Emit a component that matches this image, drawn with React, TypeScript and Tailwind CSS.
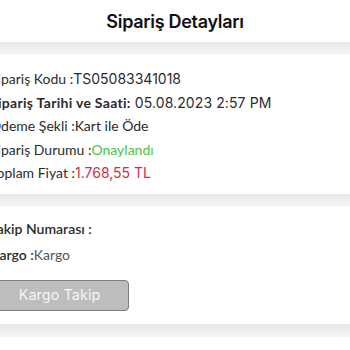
const label = "font-['Lato',sans-serif] text-[14px] text-[#2b2b2b]";
const value = "font-['Inter',sans-serif]";

function Row({ children }: { children: React.ReactNode }) {
  return <div className={`h-[23.5px] flex items-center whitespace-nowrap ${label}`}>{children}</div>;
}

function Divider() {
  return <div className="h-[13px] bg-gradient-to-b from-[#e9e9e9] to-[#f6f6f6]" />;
}

export default function App() {
  return (
    <div className="w-[350px] h-[350px] overflow-hidden bg-white">
      <div className="h-[42px] flex items-center justify-center">
        <h1 className="font-['Inter',sans-serif] text-[18px] font-semibold text-[#111] tracking-[-0.3px]">
          Sipariş Detayları
        </h1>
      </div>
      <Divider />

      <div className="-ml-[10px] pt-[12px] pb-[9px]">
        <Row>
          Sipariş Kodu :<span className={value}>TS05083341018</span>
        </Row>
        <Row>
          <span className="font-bold tracking-[0.3px]">Sipariş Tarihi ve Saati:</span>
          <span className={`${value} ml-1 tracking-[0.1px]`}>05.08.2023 2:57 PM</span>
        </Row>
        <Row>Ödeme Şekli :Kart ile Öde</Row>
        <Row>
          Sipariş Durumu :<span className="text-[#4cc43a]">Onaylandı</span>
        </Row>
        <Row>
          Toplam Fiyat :<span className={`${value} text-[#d12d4b]`}>1.768,55 TL</span>
        </Row>
      </div>

      <Divider />

      <div className="-ml-[10px] pt-[9px] pb-[13px]">
        <div className={`h-[26px] flex items-center whitespace-nowrap ${label} font-semibold`}>Takip Numarası :</div>
        <div className={`h-[26px] flex items-center whitespace-nowrap ${label}`}>
          <span className="font-semibold">Kargo :</span>
          <span className="text-[#555]">Kargo</span>
        </div>
        <button className="mt-[12px] w-[139px] h-[31px] rounded-[4px] border border-[#7d7d7d] bg-[#bdbdbd] text-[#f4f4f4] text-[14.5px] font-['Inter',sans-serif]">
          Kargo Takip
        </button>
      </div>

      <Divider />
    </div>
  );
}
